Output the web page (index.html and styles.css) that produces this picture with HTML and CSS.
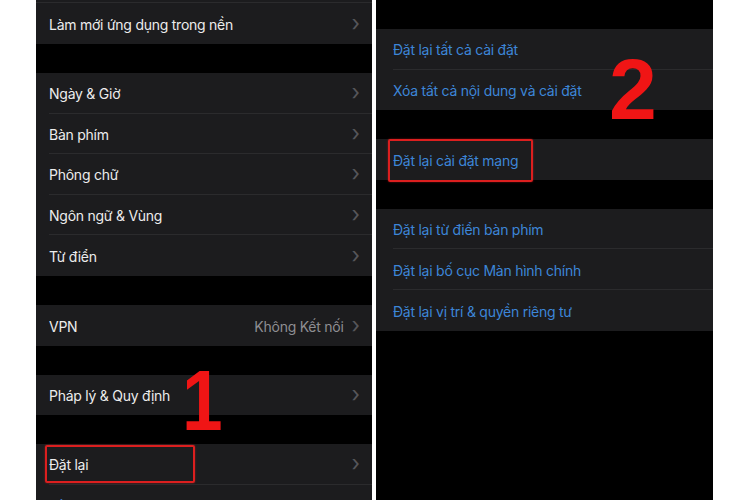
FILE: index.html
```html
<!DOCTYPE html>
<html lang="vi">
<head>
  <meta charset="UTF-8">
  <title>Đặt lại cài đặt mạng</title>
  <link rel="stylesheet" href="styles.css">
</head>
<body>

  <div class="shots">

    <div class="phone phone-left">
      <div class="strip"></div>
      <div class="group">
        <div class="row"><div class="row-inner"><span class="label">Làm mới ứng dụng trong nền</span><span class="chev">&#x203A;</span></div></div>
      </div>

      <div class="group">
        <div class="row"><div class="row-inner"><span class="label">Ngày &amp; Giờ</span><span class="chev">&#x203A;</span></div></div>
        <div class="row"><div class="row-inner"><span class="label">Bàn phím</span><span class="chev">&#x203A;</span></div></div>
        <div class="row"><div class="row-inner"><span class="label">Phông chữ</span><span class="chev">&#x203A;</span></div></div>
        <div class="row"><div class="row-inner"><span class="label">Ngôn ngữ &amp; Vùng</span><span class="chev">&#x203A;</span></div></div>
        <div class="row"><div class="row-inner"><span class="label">Từ điển</span><span class="chev">&#x203A;</span></div></div>
      </div>

      <div class="group">
        <div class="row"><div class="row-inner"><span class="label">VPN</span><span class="value">Không Kết nối</span><span class="chev">&#x203A;</span></div></div>
      </div>

      <div class="group">
        <div class="row"><div class="row-inner"><span class="label">Pháp lý &amp; Quy định</span><span class="chev">&#x203A;</span></div></div>
      </div>

      <div class="group">
        <div class="row"><div class="row-inner"><span class="label">Đặt lại</span><span class="chev">&#x203A;</span></div></div>
        <div class="row"><div class="row-inner"><span class="label link">Tắt máy</span></div></div>
      </div>

      <div class="mark mark-reset"></div>
      <span class="step step-1">1</span>
    </div>

    <div class="phone phone-right">
      <div class="group">
        <div class="row"><div class="row-inner"><span class="label link">Đặt lại tất cả cài đặt</span></div></div>
        <div class="row"><div class="row-inner"><span class="label link">Xóa tất cả nội dung và cài đặt</span></div></div>
      </div>

      <div class="group">
        <div class="row"><div class="row-inner"><span class="label link">Đặt lại cài đặt mạng</span></div></div>
      </div>

      <div class="group">
        <div class="row"><div class="row-inner"><span class="label link">Đặt lại từ điển bàn phím</span></div></div>
        <div class="row"><div class="row-inner"><span class="label link">Đặt lại bố cục Màn hình chính</span></div></div>
        <div class="row"><div class="row-inner"><span class="label link">Đặt lại vị trí &amp; quyền riêng tư</span></div></div>
      </div>

      <div class="mark mark-network"></div>
      <span class="step step-2">2</span>
    </div>

  </div>

</body>
</html>
```

FILE: styles.css
```css
body {
  margin: 0;
  background: #ffffff;
  font-family: 'Inter', 'Noto Sans', sans-serif;
  overflow: hidden;
}

.shots {
  display: flex;
  gap: 4px;
  height: 500px;
  padding-left: 36px;
}

.phone {
  position: relative;
  background: #000000;
  height: 500px;
  overflow: hidden;
}

.phone-left {
  width: 336px;
}

.phone-right {
  width: 337px;
  padding-top: 29px;
  box-sizing: border-box;
}

.strip {
  height: 3.4px;
  background: #1c1c1e;
  border-bottom: 1px solid #2b2b2d;
  box-sizing: border-box;
}

.group {
  background: #1c1c1e;
  margin-bottom: 29px;
}

.row {
  height: 40.6px;
  padding-left: 13px;
}

.phone-right .row {
  padding-left: 17px;
}

.row-inner {
  height: 100%;
  display: flex;
  align-items: center;
  border-bottom: 1px solid #2b2b2d;
  box-sizing: border-box;
  padding-right: 12px;
  padding-top: 2px;
}

.row:last-child .row-inner {
  border-bottom: none;
}

.label {
  flex: 1;
  font-size: 14px;
  color: #ececec;
  letter-spacing: -0.25px;
}

.label.link {
  color: #3d86d8;
}

.value {
  font-size: 14px;
  letter-spacing: -0.25px;
  color: #8e8e92;
  margin-right: 8px;
}

.chev {
  font-size: 22px;
  line-height: 1;
  color: #56565a;
  margin-top: -3px;
}

/* annotations drawn over the screenshots */
.mark {
  position: absolute;
  border: 2px solid #dc1f1f;
  border-radius: 2px;
  box-shadow: 0 0 2px rgba(220, 31, 31, 0.6);
}

.mark-reset {
  left: 9px;
  top: 445px;
  width: 150px;
  height: 38px;
  box-sizing: border-box;
}

.mark-network {
  left: 12px;
  top: 139px;
  width: 145px;
  height: 43px;
  box-sizing: border-box;
}

.step {
  position: absolute;
  font-family: 'Liberation Sans', Arial, sans-serif;
  font-weight: bold;
  font-size: 86px;
  line-height: 1;
  color: #f01515;
}

.step-1 {
  left: 146px;
  top: 357px;
  transform: scaleX(0.85);
  transform-origin: left top;
}

.step-2 {
  left: 233px;
  top: 46px;
}
```
